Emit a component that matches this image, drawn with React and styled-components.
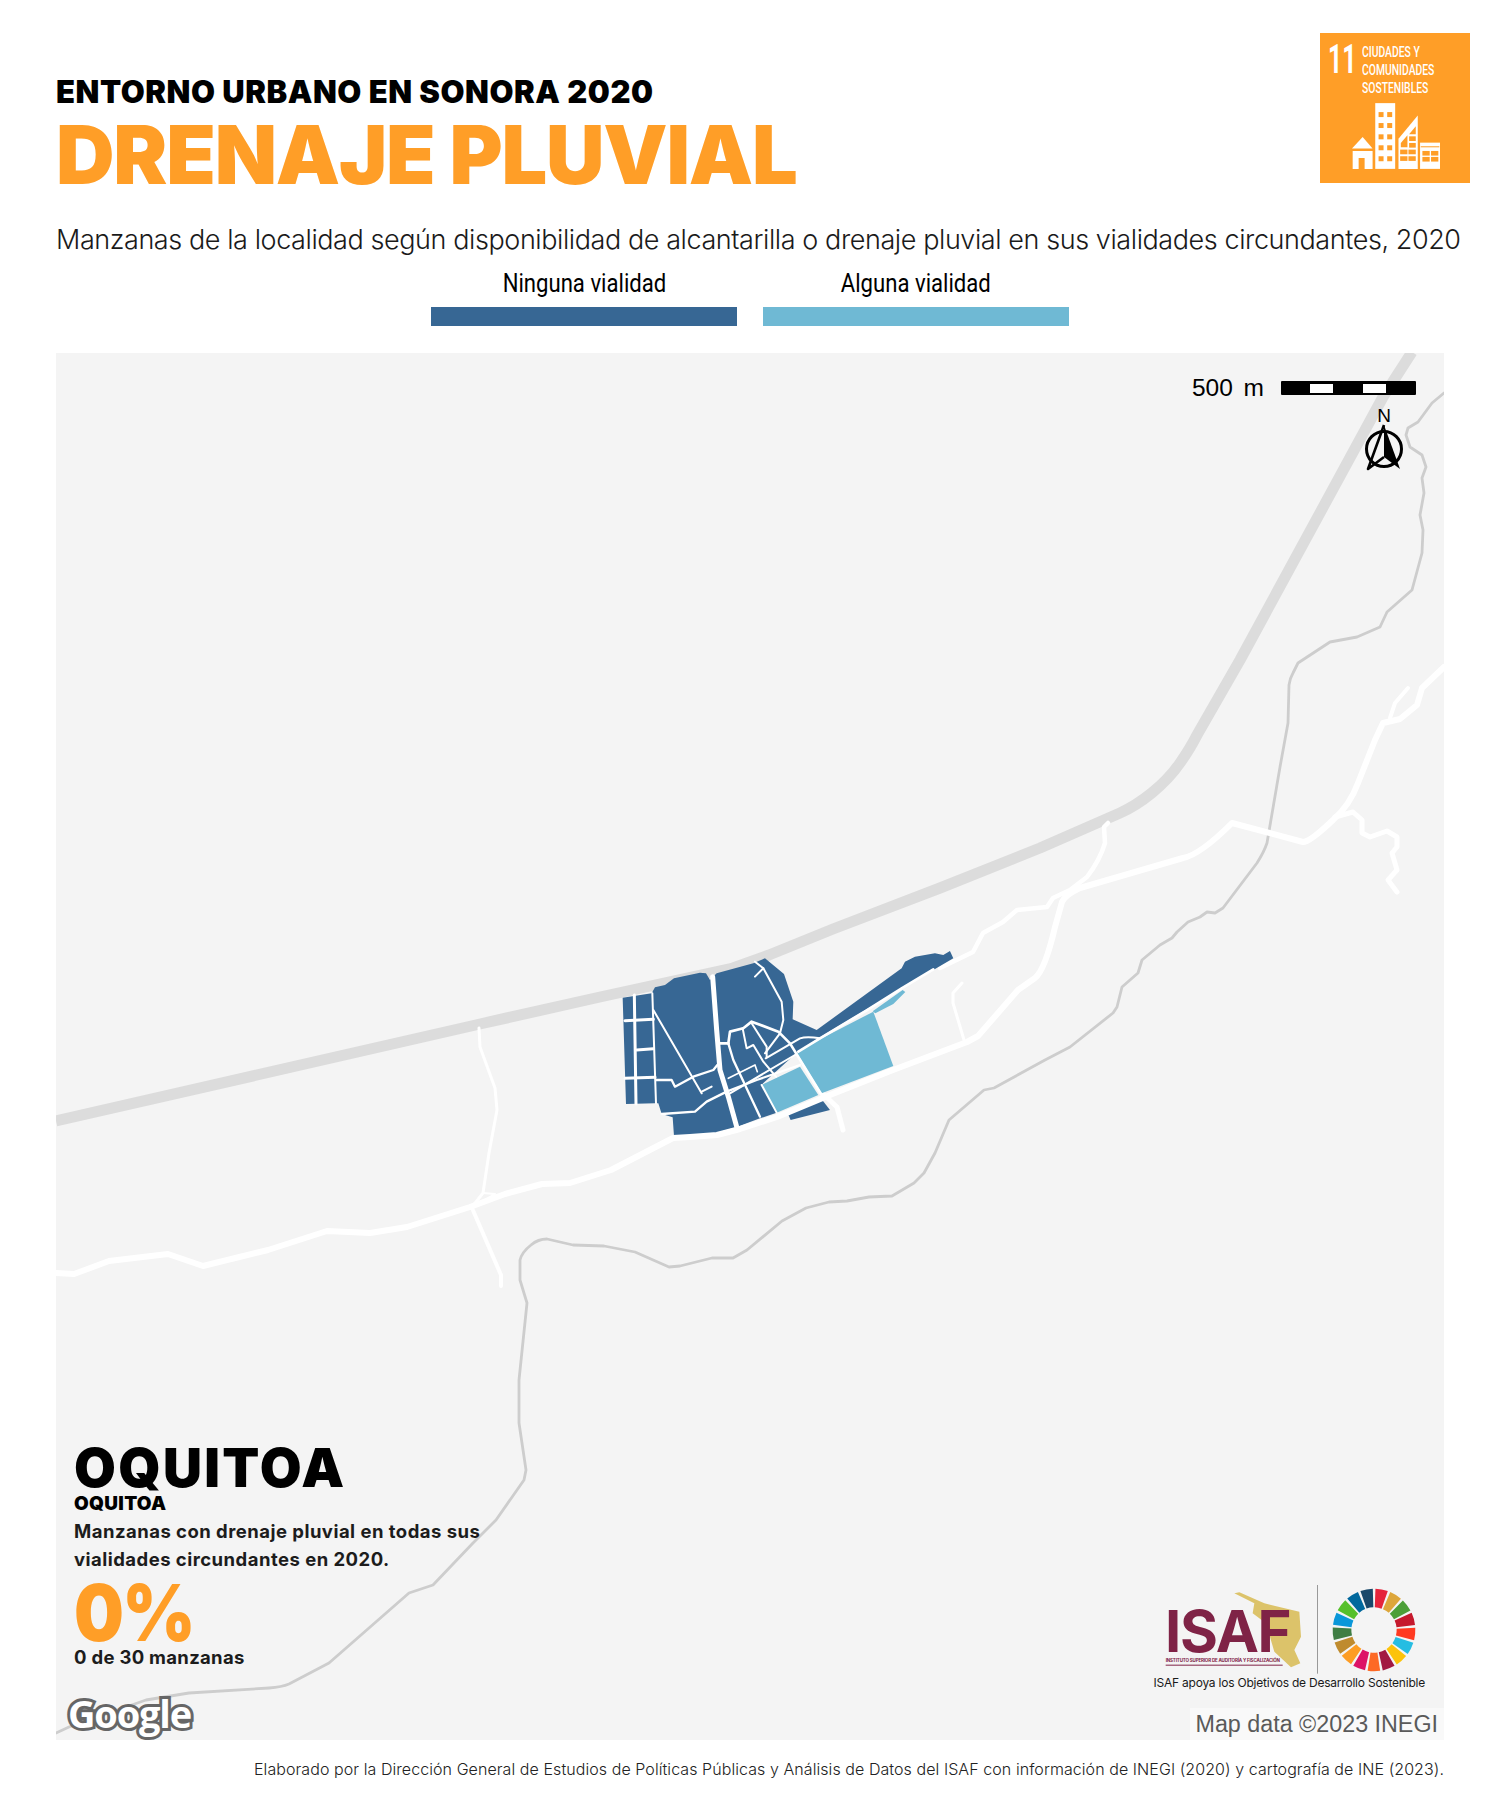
import React from "react";
import styled, { createGlobalStyle } from "styled-components";

const GlobalStyle = createGlobalStyle`
  body {
    margin: 0;
    background: #fff;
    font-family: "Inter", sans-serif;
    color: #000;
  }
`;

const Page = styled.div`
  width: 1500px;
  height: 1800px;
  overflow: hidden;
  display: flex;
  flex-direction: column;
`;

const Header = styled.header`
  display: flex;
  justify-content: space-between;
  padding: 33px 30px 0 56px;
`;

const Titles = styled.div`
  padding-top: 43px;
`;

const Kicker = styled.h2`
  margin: 0;
  font-size: 31px;
  line-height: 32px;
  font-weight: 900;
  letter-spacing: 0.55px;
  white-space: nowrap;
`;

const Title = styled.h1`
  margin: 12px 0 0;
  font-size: 81px;
  line-height: 70px;
  font-weight: 900;
  letter-spacing: -1.2px;
  color: #ff9e27;
  white-space: nowrap;
`;

const Badge = styled.div`
  width: 150px;
  height: 150px;
  background: #ff9e27;
  color: #fff;
  position: relative;
  flex: none;
`;

const BadgeNumber = styled.span`
  position: absolute;
  left: 8px;
  top: 7px;
  font: 700 40px/40px "Roboto", sans-serif;
  transform: scaleX(0.62);
  transform-origin: left top;
`;

const BadgeText = styled.div`
  position: absolute;
  left: 42px;
  top: 10px;
  font: 500 15px/18px "Roboto", sans-serif;
  white-space: nowrap;
  transform: scaleX(0.69);
  transform-origin: left top;
`;

const BadgeIcon = styled.svg`
  position: absolute;
  left: 32px;
  top: 70px;
  width: 88px;
  height: 66px;
`;

const Subtitle = styled.p`
  margin: 33px 0 0 56px;
  font-size: 27px;
  line-height: 34px;
  font-weight: 300;
  color: #1a1a1a;
  white-space: nowrap;
  letter-spacing: -0.42px;
`;

const Legend = styled.div`
  display: flex;
  justify-content: center;
  gap: 26px;
  margin-top: 15px;
`;

const LegendItem = styled.div`
  width: 306px;
  display: flex;
  flex-direction: column;
  align-items: center;
  gap: 11px;
`;

const LegendLabel = styled.span`
  font: 400 25px/24px "Roboto", sans-serif;
  transform: scaleX(0.885);
  white-space: nowrap;
`;

const LegendBar = styled.div`
  width: 100%;
  height: 19px;
  background: ${({ $color }) => $color};
`;

const MapBox = styled.section`
  position: relative;
  width: 1388px;
  height: 1387px;
  margin: 27px 0 0 56px;
  background: #f4f4f4;
  flex: none;
`;

const MapSvg = styled.svg`
  display: block;
  width: 100%;
  height: 100%;
`;

const ScaleBar = styled.div`
  position: absolute;
  right: 28px;
  top: 21px;
  display: flex;
  align-items: center;
  gap: 17px;
  font: 400 24.5px/28px "Liberation Sans", sans-serif;
  word-spacing: 4px;
`;

const ScaleTrack = styled.div`
  width: 135px;
  height: 14px;
  border-radius: 1px;
  background: #000;
  position: relative;
`;

const ScaleGap = styled.i`
  position: absolute;
  top: 3px;
  left: ${({ $left }) => $left}px;
  width: 23px;
  height: 9px;
  background: #fff;
`;

const North = styled.div`
  position: absolute;
  left: 1304px;
  top: 54px;
  width: 48px;
  text-align: center;
  font: 400 19px/17px "Liberation Sans", sans-serif;
`;

const NorthIcon = styled.svg`
  display: block;
  width: 48px;
  height: 52px;
  margin-top: -2px;
`;

const Stats = styled.div`
  position: absolute;
  left: 18px;
  top: 1087px;
  width: 440px;
`;

const Place = styled.div`
  font-size: 54px;
  line-height: 56px;
  font-weight: 900;
  letter-spacing: 2.3px;
`;

const PlaceSmall = styled.div`
  font-size: 19px;
  line-height: 20px;
  font-weight: 900;
  letter-spacing: 0.3px;
  margin-top: -2px;
`;

const StatsText = styled.p`
  margin: 3px 0 0;
  font-size: 18.5px;
  line-height: 28px;
  font-weight: 700;
  letter-spacing: 0.47px;
  color: #1c1c1c;
`;

const Percent = styled.div`
  margin-top: 5px;
  font-size: 79px;
  line-height: 68px;
  font-weight: 900;
  color: #ff9e27;
  letter-spacing: -2px;
  transform: scaleX(0.89);
  transform-origin: left center;
`;

const Count = styled.div`
  margin-top: -1px;
  font-size: 18.5px;
  line-height: 24px;
  font-weight: 700;
  letter-spacing: 0.3px;
  color: #1c1c1c;
`;

const GoogleMark = styled.span`
  position: absolute;
  left: 12px;
  bottom: 5px;
  font: 700 38px/44px "Open Sans", sans-serif;
  letter-spacing: -1.2px;
  color: #fff;
  -webkit-text-stroke: 6px #666;
  paint-order: stroke fill;
`;

const LogoSvg = styled.svg`
  position: absolute;
  left: 1075px;
  top: 1207px;
  width: 314px;
  height: 118px;
`;

const LogoCaption = styled.div`
  position: absolute;
  right: 19px;
  top: 1321px;
  font-size: 12px;
  line-height: 18px;
  font-weight: 400;
  letter-spacing: -0.22px;
  color: #1a1a1a;
  white-space: nowrap;
`;

const MapData = styled.div`
  position: absolute;
  right: 0;
  bottom: 0;
  height: 32px;
  padding: 0 6px 0 5px;
  background: #f9f9f9;
  color: #5a5a5a;
  font: 400 23.3px/32px "Liberation Sans", sans-serif;
  white-space: nowrap;
`;

const Credit = styled.footer`
  margin: 19px 56px 0 0;
  text-align: right;
  font-size: 16px;
  line-height: 20px;
  font-weight: 300;
  color: #222;
  white-space: nowrap;
  letter-spacing: 0.07px;
`;

const HIGHWAY =
  "M56 1121 L480 1024 L600 997 L733 968 L769 955 L833 929 L940 888 L1040 848 L1120 813 C1140 804 1165 785 1180 763 C1187 753 1192 745 1197 735 L1240 660 L1383 397 L1412 352";

const STREAM =
  "M56 1733 L69 1727 L146 1700 L189 1693 L269 1688 Q282 1687 289 1684 L329 1663 L409 1593 L433 1585 L473 1543 L496 1520 L524 1480 L526 1470 L519 1423 L519 1380 L527 1303 L520 1280 L520 1260 Q522 1252 531 1245 Q538 1239 547 1239 L573 1245 L604 1246 L635 1252 L669 1267 L680 1266 L712 1258 L733 1258 L747 1250 L782 1221 L806 1208 L829 1202 L847 1201 L869 1197 L892 1196 L914 1183 L924 1173 L935 1153 L949 1120 L984 1090 L994 1088 L1045 1060 L1070 1047 L1113 1013 L1117 1007 L1122 987 L1138 973 L1142 960 L1160 945 L1172 938 L1177 932 L1188 922 L1200 917 L1207 912 L1215 913 L1223 908 L1257 863 Q1264 852 1267 843 L1280 767 L1288 723 L1289 685 Q1290 678 1293 673 L1298 663 L1330 642 L1357 637 L1380 627 L1387 612 L1412 590 L1422 553 L1423 530 L1420 515 L1424 493 L1422 478 L1426 467 L1422 455 L1410 447 L1406 435 L1408 428 L1418 422 L1432 403 L1444 393";

const MAIN_ROAD =
  "M56 1273 L74 1274 L109 1261 L168 1254 L203 1266 L268 1250 L327 1231 L370 1233 L407 1227 L470 1207 L505 1194 L542 1184 L570 1183 L611 1170 L673 1138 L690 1137 L717 1135 L740 1129 L777 1117 L830 1095 L893 1070 L967 1042 L978 1036 L1018 990 L1035 978 Q1045 970 1055 927 L1062 902 Q1065 895 1080 888 L1183 858 Q1200 855 1232 823 L1303 842 Q1310 842 1333 820 Q1350 805 1358 783 L1375 740 L1383 723 L1400 719 L1417 705 L1422 688 L1444 667";

const MINOR_ROADS = [
  { d: "M1108 823 L1104 827 L1105 843 Q1100 860 1087 877 L1070 890 L1053 898 L1047 907 L1017 910 L1003 922 L983 933 L973 952 L940 968", w: 4.5 },
  { d: "M962 983 L953 993 L953 1003 L964 1040", w: 3 },
  { d: "M1335 817 L1353 812 L1362 820 L1362 833 L1370 837 L1387 831 L1397 837 L1397 847 L1392 853 L1397 870 L1388 880 L1397 892", w: 5 },
  { d: "M1390 718 L1395 703 L1408 688", w: 4 },
  { d: "M479 1028 L480 1047 L495 1088 L497 1110 L489 1153 L483 1193 L472 1207", w: 3 },
  { d: "M483 1193 L495 1194 L472 1207", w: 2 },
  { d: "M472 1208 L501 1275 L501 1286", w: 4 },
  { d: "M822 1093 L837 1107 L843 1130", w: 5 },
];

const BLUE_BLOCKS = [
  "155,190 165,172 195,165 222,145 300,128 318,130 330,150 350,130 460,100 495,85 552,132 580,215 578,268 650,300 905,115 915,95 945,80 1005,70 1030,75 1050,63 1060,85 800,238 660,322 590,368 484,465 530,548 480,565 408,592 345,610 222,618 218,562 185,552 175,520 165,520 78,522 68,203",
  "563,550 665,508 690,540 572,570",
];

const LIGHT_BLOCKS = [
  "590,368 660,328 820,245 880,408 665,490",
  "818,244 908,180 916,186 880,222 826,250",
  "485,465 600,410 655,495 530,548",
];

// calles de la localidad, en coordenadas del recorte x3
const STREETS = [
  { d: "M595 365 L660 325 L800 241 L905 175 L1000 118", w: 8 },
  { d: "M338 140 L350 300 L360 420 L385 500 L410 590", w: 15 },
  { d: "M103 195 L108 522", w: 9 },
  { d: "M75 272 L160 268", w: 9 },
  { d: "M110 360 L160 356", w: 9 },
  { d: "M75 445 L165 442", w: 9 },
  { d: "M157 190 L168 520", w: 6 },
  { d: "M168 450 L215 450 L225 470 L280 440 L340 420 L352 405", w: 7 },
  { d: "M160 240 L305 490", w: 6 },
  { d: "M305 485 L335 470", w: 6 },
  { d: "M185 552 L285 545 L320 515 L380 485 L470 450 L600 405", w: 7 },
  { d: "M385 445 L465 405 L472 425", w: 5 },
  { d: "M360 340 L385 340", w: 8 },
  { d: "M385 340 L390 305 L430 295 L455 275 L535 305 L570 340 L665 495", w: 8 },
  { d: "M385 340 L400 390 L480 560", w: 7 },
  { d: "M428 295 L440 355 L460 345 L490 395 L528 440", w: 6 },
  { d: "M455 280 L500 350 L500 380", w: 6 },
  { d: "M495 370 L540 310 L550 270 L545 215 L490 115 L465 140", w: 6 },
  { d: "M465 95 L490 115", w: 6 },
  { d: "M497 385 L600 325 Q620 318 660 325", w: 6 },
  { d: "M390 490 L590 372", w: 6 },
  { d: "M485 465 L530 548", w: 6 },
];

const SDG_COLORS = [
  "#e5243b", "#dda63a", "#4c9f38", "#c5192d", "#ff3a21", "#26bde2",
  "#fcc30b", "#a21942", "#fd6925", "#dd1367", "#fd9d24", "#bf8b2e",
  "#3f7e44", "#0a97d9", "#56c02b", "#00689d", "#19486a",
];

// un gajo de la rueda de los ODS
const wedge = (cx, cy, R, r, from, to) => {
  const p = (rad, deg) => {
    const a = ((deg - 90) * Math.PI) / 180;
    return `${(cx + rad * Math.cos(a)).toFixed(1)} ${(cy + rad * Math.sin(a)).toFixed(1)}`;
  };
  return `M${p(r, from)} L${p(R, from)} A${R} ${R} 0 0 1 ${p(R, to)} L${p(r, to)} A${r} ${r} 0 0 0 ${p(r, from)}Z`;
};

const Road = ({ d, w, color = "#fff" }) => (
  <path d={d} fill="none" stroke={color} strokeWidth={w} strokeLinejoin="round" strokeLinecap="round" />
);

const CityIcon = () => (
  <BadgeIcon viewBox="665 278 265 198">
    <g fill="#fff">
      <polygon points="665,415 697,380 727,415" />
      <path d="M667 422H727V476H703V443H685V476H667Z" />
      <rect x="735" y="278" width="60" height="198" />
      <polygon points="805,385 863,315 863,476 805,476" />
      <rect x="870" y="397" width="60" height="79" />
    </g>
    <g fill="#ff9e27">
      {[305, 338, 372, 405, 438].map((y) => (
        <React.Fragment key={y}>
          <rect x="745" y={y} width="15" height="15" />
          <rect x="771" y={y} width="15" height="15" />
        </React.Fragment>
      ))}
      <rect x="810" y="418" width="22" height="14" />
      <rect x="835" y="418" width="22" height="14" />
      <rect x="810" y="438" width="22" height="14" />
      <rect x="835" y="438" width="22" height="14" />
      <polygon points="812,398 832,375 832,411 812,411" />
      <rect x="837" y="378" width="20" height="14" />
      <rect x="837" y="398" width="20" height="14" />
      <polygon points="837,372 857,348 857,372" />
      <rect x="872" y="408" width="56" height="3" />
      <rect x="877" y="422" width="22" height="14" />
      <rect x="903" y="422" width="22" height="14" />
      <rect x="877" y="440" width="22" height="14" />
      <rect x="903" y="440" width="22" height="14" />
    </g>
  </BadgeIcon>
);

const Logos = () => (
  <LogoSvg viewBox="0 0 942 354">
    <polygon
      fill="#dcc36a"
      points="310,100 325,97 400,130 505,155 510,230 490,270 508,310 480,322 430,275 405,190 365,160 370,130"
    />
    <text x="102" y="275" fontFamily="Inter, sans-serif" fontWeight="700" fontSize="174" fill="#7f2346" textLength="380">
      ISAF
    </text>
    <text x="104" y="306" fontFamily="Inter, sans-serif" fontWeight="700" fontSize="13.5" fill="#7f2346" textLength="343">
      INSTITUTO SUPERIOR DE AUDITORÍA Y FISCALIZACIÓN
    </text>
    <rect x="104" y="314" width="351" height="3" fill="#7f2346" />
    <rect x="558" y="75" width="3" height="266" fill="#999" />
    {SDG_COLORS.map((color, i) => (
      <path
        key={color}
        fill={color}
        d={wedge(729, 210, 124, 68, 2 + (i * 360) / 17, 2 + (i * 360) / 17 + 17.5)}
      />
    ))}
  </LogoSvg>
);

const App = () => (
  <>
    <GlobalStyle />
    <Page>
      <Header>
        <Titles>
          <Kicker>ENTORNO URBANO EN SONORA 2020</Kicker>
          <Title>DRENAJE PLUVIAL</Title>
        </Titles>
        <Badge>
          <BadgeNumber>11</BadgeNumber>
          <BadgeText>
            CIUDADES Y
            <br />
            COMUNIDADES
            <br />
            SOSTENIBLES
          </BadgeText>
          <CityIcon />
        </Badge>
      </Header>

      <Subtitle>
        Manzanas de la localidad según disponibilidad de alcantarilla o drenaje pluvial en sus vialidades circundantes, 2020
      </Subtitle>

      <Legend>
        <LegendItem>
          <LegendLabel>Ninguna vialidad</LegendLabel>
          <LegendBar $color="#376794" />
        </LegendItem>
        <LegendItem>
          <LegendLabel>Alguna vialidad</LegendLabel>
          <LegendBar $color="#6fb9d4" />
        </LegendItem>
      </Legend>

      <MapBox>
        <MapSvg viewBox="56 353 1388 1387">
          <Road d={STREAM} w={2.8} color="#cdcdcd" />
          <path d={HIGHWAY} fill="none" stroke="#dcdcdc" strokeWidth="11" strokeLinejoin="round" />
          {MINOR_ROADS.map((road) => (
            <Road key={road.d} d={road.d} w={road.w} />
          ))}
          <g transform="translate(600 930) scale(0.3333)">
            {BLUE_BLOCKS.map((points) => (
              <polygon key={points} points={points} fill="#376794" />
            ))}
            {LIGHT_BLOCKS.map((points) => (
              <polygon key={points} points={points} fill="#6fb9d4" />
            ))}
            {STREETS.map((street) => (
              <Road key={street.d} d={street.d} w={street.w} />
            ))}
          </g>
          <Road d={MAIN_ROAD} w={6} />
        </MapSvg>

        <ScaleBar>
          <span>500 m</span>
          <ScaleTrack>
            <ScaleGap $left={29} />
            <ScaleGap $left={82} />
          </ScaleTrack>
        </ScaleBar>

        <North>
          N
          <NorthIcon viewBox="0 0 48 52">
            <circle cx="24" cy="27" r="17.5" fill="none" stroke="#000" strokeWidth="3" />
            <path d="M24 3 L40 47 L24 35Z" fill="#000" />
            <path d="M24 3 L8 47 L24 35" fill="none" stroke="#000" strokeWidth="2.6" strokeLinejoin="round" />
          </NorthIcon>
        </North>

        <Stats>
          <Place>OQUITOA</Place>
          <PlaceSmall>OQUITOA</PlaceSmall>
          <StatsText>
            Manzanas con drenaje pluvial en todas sus
            <br />
            vialidades circundantes en 2020.
          </StatsText>
          <Percent>0%</Percent>
          <Count>0 de 30 manzanas</Count>
        </Stats>

        <GoogleMark>Google</GoogleMark>
        <Logos />
        <LogoCaption>ISAF apoya los Objetivos de Desarrollo Sostenible</LogoCaption>
        <MapData>Map data ©2023 INEGI</MapData>
      </MapBox>

      <Credit>
        Elaborado por la Dirección General de Estudios de Políticas Públicas y Análisis de Datos del ISAF con información de INEGI (2020) y cartografía de INE (2023).
      </Credit>
    </Page>
  </>
);

export default App;
